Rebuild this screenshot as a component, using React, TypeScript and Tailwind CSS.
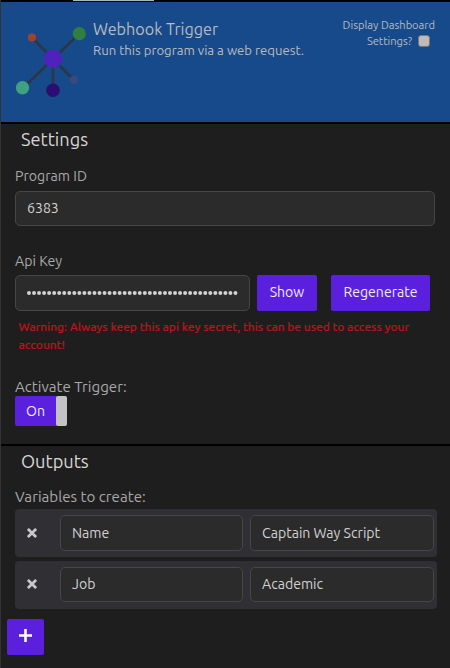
import React from "react";

const field =
  "flex items-center rounded-[5px] border border-[#464646] bg-[#2b2b2b] px-[11px] text-[14.1px] text-[#d2d2d2] whitespace-nowrap overflow-hidden";
const button =
  "flex items-center justify-center rounded-[2px] bg-[#5b20de] text-[14.1px] text-[#f0ecfa] whitespace-nowrap";

function WebhookLogo() {
  return (
    <svg className="h-[120px] w-[92px] shrink-0" viewBox="1 2 92 120">
      <g stroke="#2c3646" strokeWidth="2.6">
        <path d="M53 59 32 37.5M53 59 79 34M53 59 23 88M53 59V90M53 59 74 80" />
      </g>
      <circle cx="32" cy="37.5" r="4.1" fill="#a0422f" />
      <circle cx="79.3" cy="33.7" r="6.6" fill="#2f7f40" />
      <circle cx="22.5" cy="87.7" r="6.7" fill="#40a082" />
      <circle cx="53" cy="90.3" r="6.8" fill="#2c0d72" />
      <circle cx="74" cy="79.8" r="4.1" fill="#364b80" />
      <circle cx="53" cy="58.7" r="9.2" fill="#4f22bb" />
    </svg>
  );
}

function CrossIcon() {
  return (
    <svg className="h-[10px] w-[10px]" viewBox="0 0 10 10" stroke="#c8c8ca" strokeWidth="2.7">
      <path d="M.9.9 9.1 9.1M9.1.9.9 9.1" />
    </svg>
  );
}

function VariableRow({ name, value, compact }: { name: string; value: string; compact?: boolean }) {
  const height = compact ? "h-[35px]" : "h-[36px] pt-px";
  return (
    <div className="flex h-12 w-[422px] rounded-[4px] bg-[#302f34] pt-[6px]">
      <button className={`flex w-[45px] justify-start pl-[12.4px] ${compact ? "pt-[11.7px]" : "pt-[12.6px]"}`}>
        <CrossIcon />
      </button>
      <div className={`${field} ${height} w-[183px]`}>{name}</div>
      <div className={`${field} ${height} ml-[7px] w-[184px]`}>{value}</div>
    </div>
  );
}

export default function App() {
  return (
    <div className="flex h-[668px] w-[450px] flex-col overflow-hidden border-l border-[#333333] bg-[#1e1e1e] font-['Ubuntu','Noto_Sans',sans-serif] text-[#a9a9a9]">
      <div className="h-[2px] shrink-0 bg-black pl-[72px]">
        <div className="h-px w-[81px] bg-[#a9b8bb]" />
      </div>

      <header className="flex h-[120px] shrink-0 bg-[#174a8b] text-[#b9bbbe]">
        <WebhookLogo />
        <div className="w-[222px] pt-4 whitespace-nowrap">
          <h1 className="text-[16.15px] leading-[22px]">Webhook Trigger</h1>
          <p className="text-[13.15px] leading-5">Run this program via a web request.</p>
        </div>
        <div className="flex-1 pt-[15px] pr-[15px] text-right text-[11.1px] leading-4 whitespace-nowrap">
          <div>Display Dashboard</div>
          <label className="flex items-center justify-end pr-[5px]">
            Settings?
            <span className="ml-[6px] h-[12px] w-[12px] rounded-[3px] border border-[#77777a] bg-[#bdbcbb]" />
          </label>
        </div>
      </header>

      <section className="h-[322px] shrink-0 border-t-2 border-black pt-px pl-[14px]">
        <h2 className="pl-[6px] text-[18.2px] leading-7 text-[#d6d6d6]">Settings</h2>
        <div className="mt-[13px] text-[14.15px] leading-5">Program ID</div>
        <div className={`${field} mt-[5px] h-[35px] w-[420px]`}>6383</div>
        <div className="mt-[25px] text-[14.15px] leading-5">Api Key</div>
        <div className="mt-1 flex h-9">
          <div className={`${field} w-[235px]`}>
            <svg className="h-1 w-[212px]" viewBox="0 0 212 4" fill="#d2d2d2">
              {Array.from({ length: 42 }, (_, i) => (
                <circle key={i} cx={2 + i * 5.06} cy="2" r="2" />
              ))}
            </svg>
          </div>
          <button className={`${button} ml-[7px] w-[60px]`}>Show</button>
          <button className={`${button} ml-[14px] w-[99px]`}>Regenerate</button>
        </div>
        <p className="mt-[7px] pl-[3.5px] text-[11.9px] leading-[18px] font-medium whitespace-nowrap text-[#b5151b] [-webkit-text-stroke:0.2px_#b5151b]">
          Warning: Always keep this api key secret, this can be used to access your
          <br />
          account!
        </p>
        <div className="mt-[23px] text-[15.1px] leading-[19px]">Activate Trigger:</div>
        <div className="flex h-[30px] w-[52px] rounded-[2px] bg-[#5b20de]">
          <span className="w-[41px] pl-[11px] text-[14.1px] leading-[30px] text-[#f0ecfa]">On</span>
          <span className="w-[11px] rounded-[2px] bg-[#c3c3c3]" />
        </div>
      </section>

      <section className="shrink-0 border-t-2 border-black pt-px pl-[14px]">
        <h2 className="pl-[6px] text-[18.2px] leading-7 text-[#d6d6d6]">Outputs</h2>
        <div className="mt-3 text-[15.15px] leading-5">Variables to create:</div>
        <div className="mt-[2px] flex flex-col gap-1">
          <VariableRow name="Name" value="Captain Way Script" />
          <VariableRow name="Job" value="Academic" compact />
        </div>
        <button className={`${button} mt-[10px] -ml-2 h-9 w-[37px]`}>
          <svg className="-mt-[3px] h-[13px] w-[13px]" viewBox="0 0 13 13" stroke="#fff" strokeWidth="2.6" strokeLinejoin="round">
            <path d="M6.5 0V13M0 6.5H13" />
          </svg>
        </button>
      </section>
    </div>
  );
}
